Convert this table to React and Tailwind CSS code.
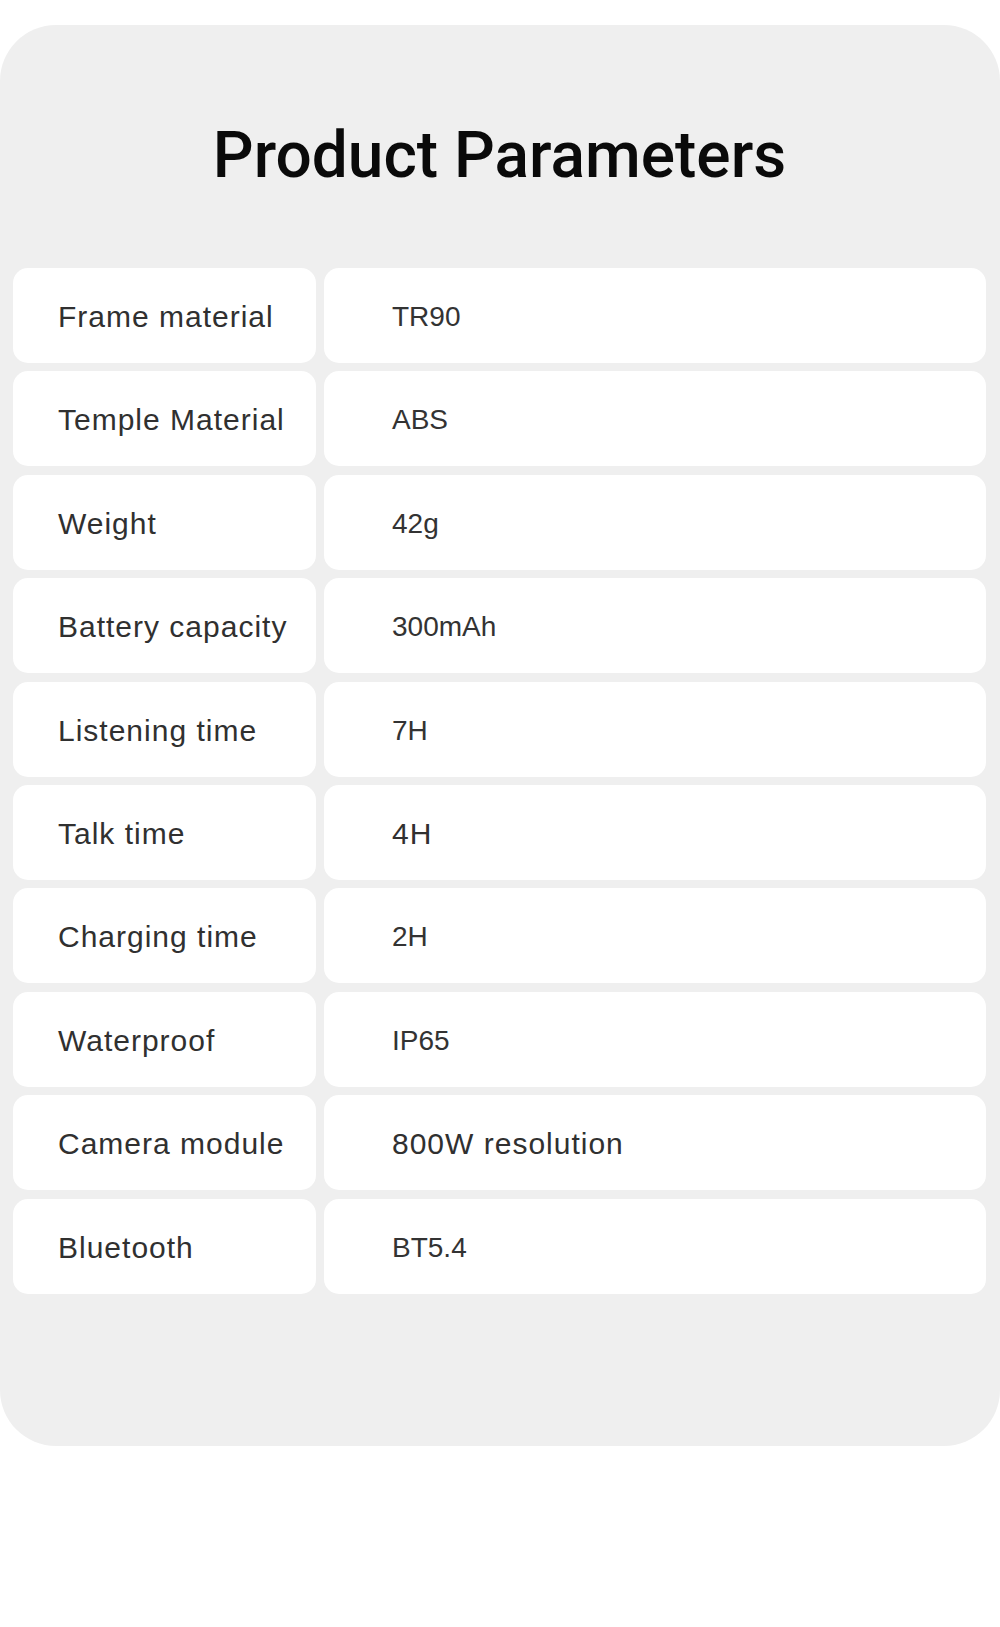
const params = [
  { label: 'Frame material', value: 'TR90' },
  { label: 'Temple Material', value: 'ABS' },
  { label: 'Weight', value: '42g' },
  { label: 'Battery capacity', value: '300mAh' },
  { label: 'Listening time', value: '7H' },
  { label: 'Talk time', value: '4H', wide: true },
  { label: 'Charging time', value: '2H' },
  { label: 'Waterproof', value: 'IP65' },
  { label: 'Camera module', value: '800W resolution', wide: true },
  { label: 'Bluetooth', value: 'BT5.4' },
];

const ParamRow = ({ label, value, wide }) => (
  <>
    <div className="h-[95px] rounded-[15px] bg-white flex items-center pl-[45px] pt-[3px]">
      <span className="text-[30px] leading-none tracking-[1px] text-[#303030] whitespace-nowrap">
        {label}
      </span>
    </div>
    <div className="h-[95px] rounded-[15px] bg-white flex items-center pl-[68px] pt-[3px]">
      {/* a couple of values use the label style in the original */}
      <span
        className={
          wide
            ? 'text-[30px] leading-none tracking-[1px] text-[#303030] whitespace-nowrap'
            : 'text-[28px] leading-none text-[#333333] whitespace-nowrap'
        }
      >
        {value}
      </span>
    </div>
  </>
);

export default function App() {
  return (
    <div className="w-[1000px] h-[1627px] bg-white pt-[25px] font-['Liberation_Sans',Arial,sans-serif]">
      <div className="bg-[#efefef] rounded-[56px] pt-[95px] pb-[152px] pl-[13px] pr-[14px]">
        <h1 className="text-center text-[64px] leading-[72px] font-medium text-[#0a0a0a] font-['Roboto',Arial,sans-serif]">
          Product Parameters
        </h1>

        <div className="mt-[76px] grid grid-cols-[303px_662px] gap-x-[8px] gap-y-[8.4px]">
          {params.map((p) => (
            <ParamRow key={p.label} {...p} />
          ))}
        </div>
      </div>
    </div>
  );
}
